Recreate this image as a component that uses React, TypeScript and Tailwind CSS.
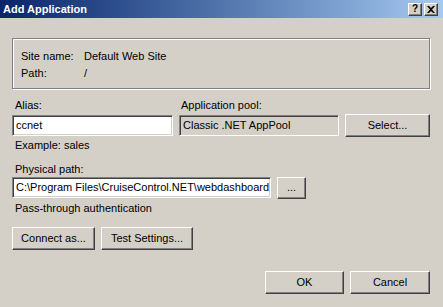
import React from "react";

const raised =
  "border border-t-white border-l-white border-b-[#404040] border-r-[#404040] shadow-[inset_-1px_-1px_0_#808080] bg-[#d4d0c8] flex items-center justify-center";
const sunken =
  "border border-t-[#808080] border-l-[#808080] border-b-white border-r-white shadow-[inset_1px_1px_0_#404040,inset_-1px_-1px_0_#d4d0c8] flex items-center pl-[3px] whitespace-nowrap overflow-hidden";

export default function App() {
  return (
    <div className="w-[443px] h-[307px] bg-[#d4d0c8] flex flex-col font-['Liberation_Sans',Arial,sans-serif] text-[11px] leading-[13px] text-black overflow-hidden">
      <div className="h-[18px] bg-gradient-to-r from-[#0a246a] to-[#a6caf0] flex items-center pl-[3px] pr-[5px]">
        <span className="text-white font-bold text-[11px] flex-1">Add Application</span>
        <div className="flex gap-[2px]">
          <div className={`${raised} w-[14px] h-[13px] text-[10px] font-bold leading-none`}>?</div>
          <div className={`${raised} w-[14px] h-[13px]`}>
            <svg width="8" height="7" viewBox="0 0 8 7">
              <path d="M0 0L2 0L4 2L6 0L8 0L5 3.5L8 7L6 7L4 5L2 7L0 7L3 3.5Z" fill="#000" />
            </svg>
          </div>
        </div>
      </div>

      <div className="flex flex-col pl-[12px] pr-[13px]">
        <div className="mt-[20px] border border-[#808080] shadow-[inset_1px_1px_0_#fff,1px_1px_0_#fff] pl-[8px] pt-[11px] pb-[8px] flex flex-col gap-[4px]">
          <div className="flex">
            <span className="w-[63px]">Site name:</span>
            <span>Default Web Site</span>
          </div>
          <div className="flex">
            <span className="w-[63px]">Path:</span>
            <span>/</span>
          </div>
        </div>

        <div className="grid grid-cols-[161px_160px_85px] gap-x-[6px] mt-[10px]">
          <span className="pl-[3px]">Alias:</span>
          <span className="pl-[2px]">Application pool:</span>
          <span></span>
        </div>
        <div className="grid grid-cols-[161px_160px_85px] gap-x-[6px] mt-[2px] h-[23px] items-center">
          <div className={`${sunken} h-[21px] bg-white`}>ccnet</div>
          <div className={`${sunken} h-[21px] bg-[#d4d0c8]`}>Classic .NET AppPool</div>
          <div className={`${raised} h-[23px]`}>Select...</div>
        </div>

        <span className="mt-[2px] ml-[3px]">Example: sales</span>

        <span className="mt-[11px] ml-[3px]">Physical path:</span>
        <div className="flex gap-x-[6px] h-[23px] items-center">
          <div className={`${sunken} w-[259px] h-[21px] bg-white pl-[2px]`}>
            C:\Program Files\CruiseControl.NET\webdashboard
          </div>
          <div className={`${raised} w-[29px] h-[22px]`}>...</div>
        </div>

        <span className="mt-[3px] ml-[3px]">Pass-through authentication</span>

        <div className="flex gap-x-[6px] mt-[12px]">
          <div className={`${raised} w-[83px] h-[23px]`}>Connect as...</div>
          <div className={`${raised} w-[92px] h-[23px]`}>Test Settings...</div>
        </div>

        <div className="flex justify-end gap-x-[6px] mt-[21px]">
          <div className={`${raised} w-[79px] h-[23px]`}>OK</div>
          <div className={`${raised} w-[80px] h-[23px]`}>Cancel</div>
        </div>
      </div>
    </div>
  );
}
